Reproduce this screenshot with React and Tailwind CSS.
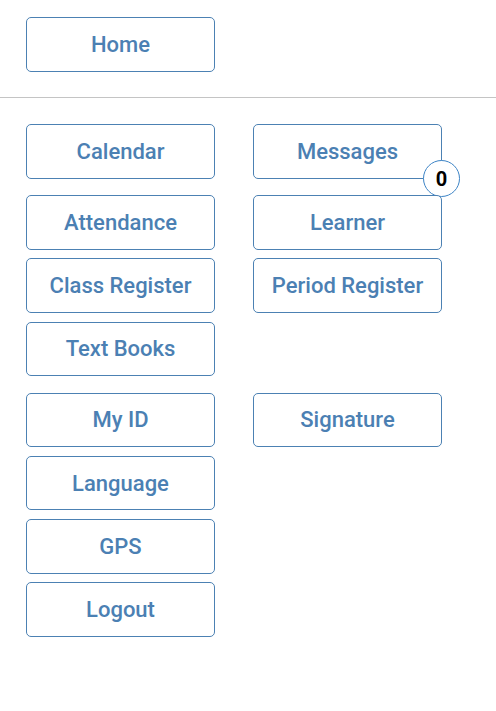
import React from "react";

const font = { fontFamily: "Roboto, 'Noto Sans', sans-serif" };

function Btn({ children, badge }) {
  return (
    <div className="relative">
      <button className="w-[189px] h-[54.5px] rounded-[5px] border-[1.5px] border-[#4c81b3] bg-white text-[#4b80b3] text-[22px] font-medium flex items-center justify-center leading-none pt-px">
        {children}
      </button>
      {badge !== undefined && (
        <div className="absolute -right-[18px] top-[36px] w-[37px] h-[37px] rounded-full border-[1.5px] border-[#3d84c6] bg-white flex items-center justify-center text-black text-[20px] font-bold leading-none">
          {badge}
        </div>
      )}
    </div>
  );
}

function Row({ children }) {
  return <div className="flex gap-[38px]">{children}</div>;
}

export default function App() {
  return (
    <div className="w-[496px] h-[711px] bg-white" style={font}>
      <div className="pt-[17px] pl-[26px]">
        <Btn>Home</Btn>
      </div>
      <div className="mt-[25.5px] h-px bg-[#c4c4c4]" />
      <div className="pt-[26px] pl-[26px] flex flex-col gap-[16.5px]">
        <Row>
          <Btn>Calendar</Btn>
          <Btn badge="0">Messages</Btn>
        </Row>
        <div className="flex flex-col gap-[8.75px]">
          <Row>
            <Btn>Attendance</Btn>
            <Btn>Learner</Btn>
          </Row>
          <Row>
            <Btn>Class Register</Btn>
            <Btn>Period Register</Btn>
          </Row>
          <Row>
            <Btn>Text Books</Btn>
          </Row>
        </div>
        <div className="flex flex-col gap-[8.75px]">
          <Row>
            <Btn>My ID</Btn>
            <Btn>Signature</Btn>
          </Row>
          <Row>
            <Btn>Language</Btn>
          </Row>
          <Row>
            <Btn>GPS</Btn>
          </Row>
          <Row>
            <Btn>Logout</Btn>
          </Row>
        </div>
      </div>
    </div>
  );
}
